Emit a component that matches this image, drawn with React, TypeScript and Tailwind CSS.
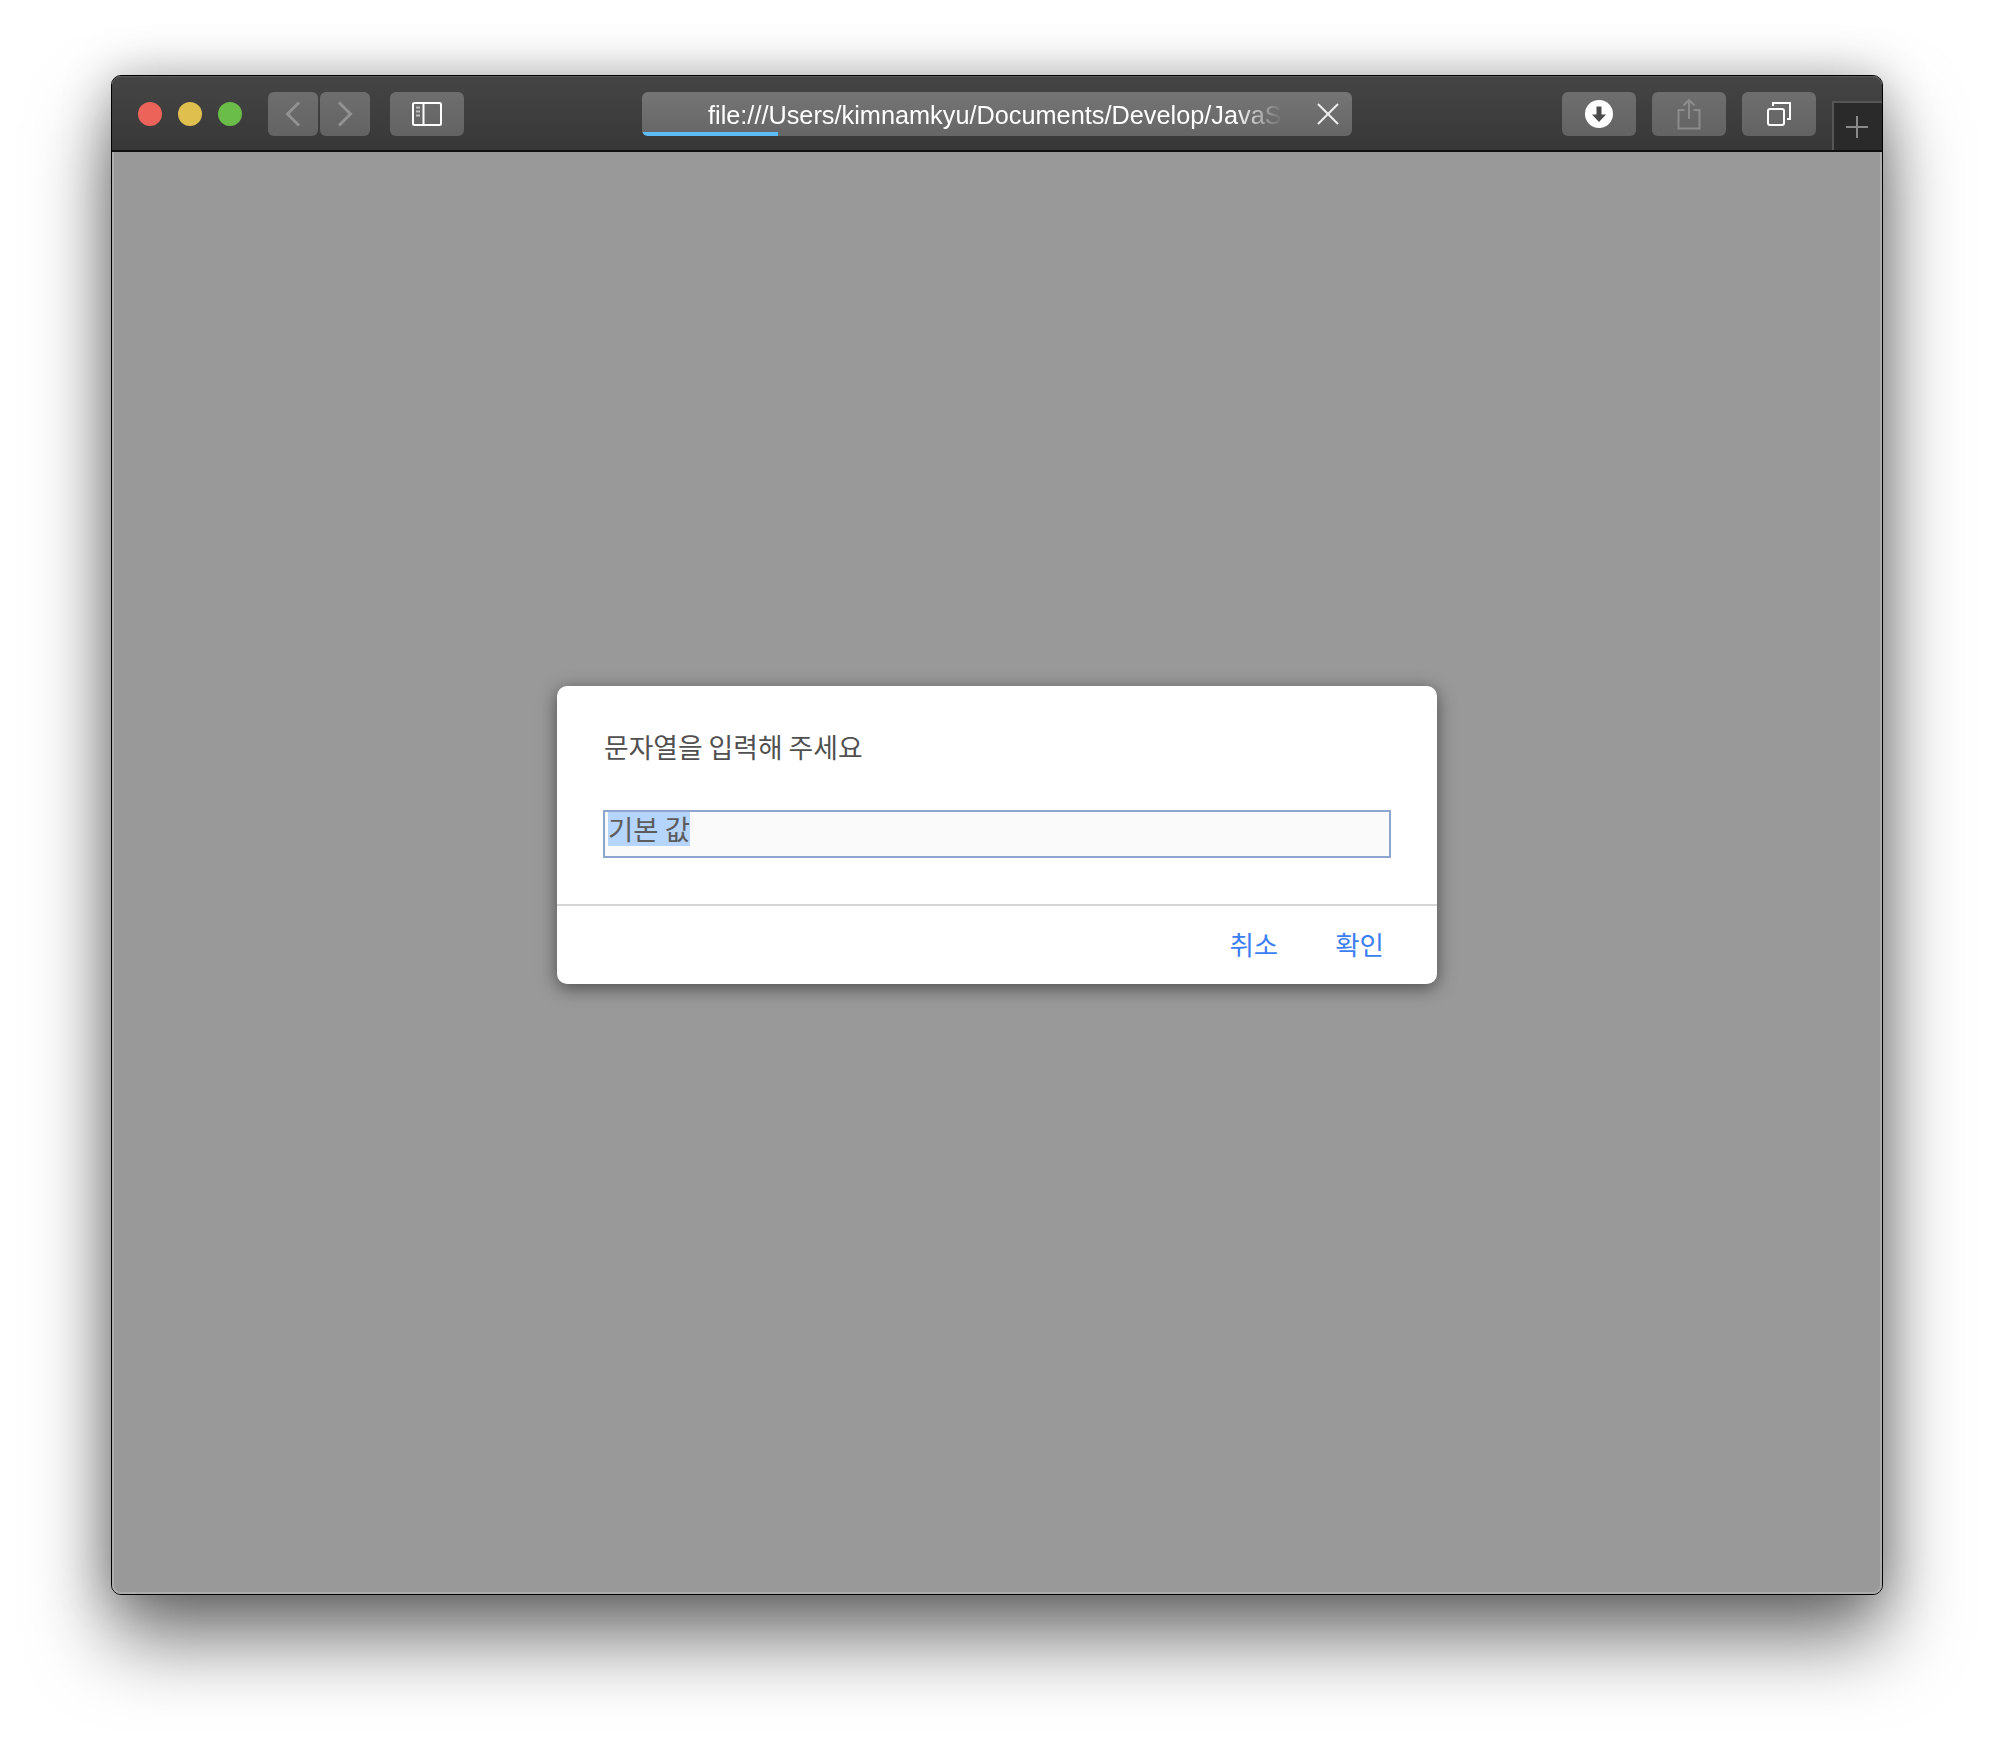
const ko = '[font-family:"Noto_Sans_CJK_KR",sans-serif]';

function ToolButton({ width, children }: { width: string; children: React.ReactNode }) {
  return (
    <div className={`${width} h-[44px] rounded-[6px] bg-gradient-to-b from-[#6e6e6e] to-[#636363] flex items-center justify-center`}>
      {children}
    </div>
  );
}

function Light({ color }: { color: string }) {
  return <div className={`w-[24px] h-[24px] rounded-full ${color}`} />;
}

function Toolbar() {
  return (
    <div className="h-[76px] shrink-0 flex items-start bg-gradient-to-b from-[#454545] to-[#383838] border-b-2 border-[#111] shadow-[inset_0_1px_0_#5c5c5c] pl-[26px] rounded-t-[9px]">
      <div className="flex gap-[16px] mt-[26px]">
        <Light color="bg-[#ec6459]" />
        <Light color="bg-[#dfbf4e]" />
        <Light color="bg-[#6abd49]" />
      </div>
      <div className="flex gap-[2px] ml-[26px] mt-[16px]">
        <ToolButton width="w-[50px]">
          <svg width="16" height="26" viewBox="0 0 16 26" fill="none" stroke="#929292" strokeWidth="3">
            <path d="M14 1.5 2.500 13 14 24.500" />
          </svg>
        </ToolButton>
        <ToolButton width="w-[50px]">
          <svg width="16" height="26" viewBox="0 0 16 26" fill="none" stroke="#929292" strokeWidth="3">
            <path d="M2 1.5 13.500 13 2 24.500" />
          </svg>
        </ToolButton>
      </div>
      <div className="ml-[20px] mt-[16px]">
        <ToolButton width="w-[74px]">
          <svg width="30" height="24" viewBox="0 0 30 24" fill="none" stroke="#fff" strokeWidth="2">
            <rect x="1" y="1" width="28" height="22" rx="1.5" />
            <path d="M11.500 1v22" />
            <path d="M4 5.500h4M4 9.500h4M4 13.500h4" stroke="#bdbdbd" strokeWidth="2" />
          </svg>
        </ToolButton>
      </div>
      <div className="relative ml-[178px] mt-[16px] w-[710px] h-[44px] rounded-[6px] bg-gradient-to-b from-[#757575] to-[#666] overflow-hidden flex items-center pl-[66px] pr-[13px]">
        <span className='whitespace-nowrap text-[25.3px] leading-[44px] pt-[2px] text-white [font-family:"Liberation_Sans",sans-serif] [mask-image:linear-gradient(to_right,black_90%,transparent_98%)]'>
          file:///Users/kimnamkyu/Documents/Develop/JavaSc
        </span>
        <svg className="ml-auto shrink-0" width="22" height="22" viewBox="0 0 22 22" fill="none" stroke="#efefef" strokeWidth="2">
          <path d="M1 1l20 20M21 1 1 21" />
        </svg>
        <div className="absolute left-0 bottom-0 w-[136px] h-[4px] bg-[#5cbcf6]" />
      </div>
      <div className="flex gap-[16px] ml-[210px] mt-[16px]">
        <ToolButton width="w-[74px]">
          <svg width="28" height="28" viewBox="0 0 28 28">
            <circle cx="14" cy="14" r="14" fill="#fff" />
            <path d="M11.500 6.500h5v8h4.500L14 22l-7-7.500h4.500z" fill="#4a4a4a" />
          </svg>
        </ToolButton>
        <ToolButton width="w-[74px]">
          <svg width="24" height="32" viewBox="0 0 24 32" fill="none" stroke="#8c8c8c" strokeWidth="2">
            <path d="M7.500 12H1.500v18.500h21V12h-6" />
            <path d="M12 21V2M6.500 7.500 12 2l5.500 5.500" />
          </svg>
        </ToolButton>
        <ToolButton width="w-[74px]">
          <svg width="24" height="24" viewBox="0 0 24 24" fill="none" stroke="#fff" strokeWidth="2">
            <rect x="1" y="7" width="16" height="16" rx="2" />
            <path d="M6 4V1h17v16h-3" />
          </svg>
        </ToolButton>
      </div>
      <div className="ml-[16px] mt-[25px] flex-1 h-[49px] bg-[#2a2a2a] border-l-2 border-t-2 border-[#565656] pr-[2px] flex items-center justify-center">
        <svg width="22" height="22" viewBox="0 0 22 22" stroke="#8a8a8a" strokeWidth="2">
          <path d="M11 0v22M0 11h22" />
        </svg>
      </div>
    </div>
  );
}

function PromptDialog() {
  return (
    <div className={`w-[880px] h-[298px] rounded-[10px] bg-white shadow-[0_4px_18px_rgba(0,0,0,0.5)] flex flex-col ${ko}`}>
      <div className="pl-[47px] pr-[46px] pt-[42px] h-[220px] border-b-2 border-[#d5d5d5]">
        <div className="text-[26.8px] leading-[38px] text-[#505050]">문자열을 입력해 주세요</div>
        <div className="mt-[44px] -ml-[1px] h-[48px] border-2 border-[#8ea5cf] bg-[#fafafa] pl-[3px] text-[#5c5c5c] text-[27.5px] leading-[32px]">
          <span className="inline-block h-[34px] bg-[#b5d5fd]">기본 값</span>
        </div>
      </div>
      <div className="flex justify-end gap-[57px] pr-[53px] pt-[19px] text-[26.5px] leading-[38px] text-[#3b7ef2]">
        <span>취소</span>
        <span>확인</span>
      </div>
    </div>
  );
}

export default function App() {
  return (
    <div className="w-[1994px] h-[1742px] bg-white pl-[111px] pt-[75px] overflow-hidden">
      <div className="w-[1772px] h-[1520px] rounded-[10px] border border-black bg-[#999] flex flex-col shadow-[0_44px_80px_rgba(0,0,0,0.55),0_0_48px_rgba(0,0,0,0.25)]">
        <Toolbar />
        <div className="flex-1 rounded-b-[9px] border-x-2 border-b-2 border-[#adadad] pt-[534px] flex justify-center">
          <PromptDialog />
        </div>
      </div>
    </div>
  );
}
